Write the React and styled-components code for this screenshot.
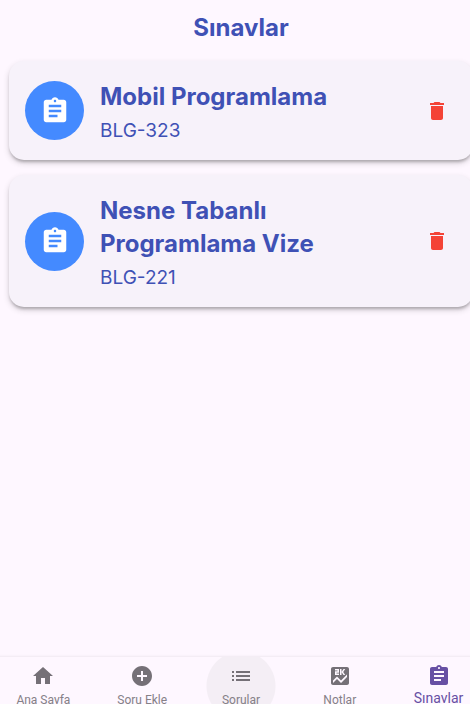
import React from "react";
import styled, { createGlobalStyle } from "styled-components";
import {
  MdAddCircle,
  MdAssignment,
  MdDelete,
  MdHome,
  MdList,
  MdScore,
} from "react-icons/md";

const GlobalStyle = createGlobalStyle`
  * { box-sizing: border-box; }
  body {
    margin: 0;
    background: #fef7ff;
    overflow: hidden;
  }
`;

const Page = styled.div`
  display: flex;
  flex-direction: column;
  width: calc(100% + 12px);
  height: 100vh;
  overflow: hidden;
  color: #3f51b5;
  font-family: Inter, "Noto Sans", sans-serif;
`;

const Header = styled.header`
  padding: 11px 16px 17px;
  text-align: center;
`;

const PageTitle = styled.h1`
  margin: 0;
  font-size: 24px;
  line-height: 33px;
  font-weight: 700;
`;

const ExamList = styled.ul`
  flex: 1;
  display: flex;
  flex-direction: column;
  gap: 15px;
  margin: 0;
  padding: 0 9px;
  list-style: none;
`;

const ExamCard = styled.li`
  display: flex;
  align-items: center;
  gap: 16px;
  padding: 16px;
  border-radius: 15px;
  background: #f7f2fa;
  box-shadow: 0 3px 3px -1px rgba(0, 0, 0, 0.22),
    0 3px 6px rgba(0, 0, 0, 0.16);
`;

const Avatar = styled.span`
  flex: none;
  display: grid;
  place-items: center;
  width: 59px;
  height: 59px;
  border-radius: 50%;
  background: #448aff;
  color: #fff;
  font-size: 30px;
`;

const ExamText = styled.div`
  flex: 1;
  display: flex;
  flex-direction: column;
  gap: 5px;
  padding-top: 3px;
`;

const ExamName = styled.h2`
  margin: 0;
  font-size: 24px;
  line-height: 33px;
  font-weight: 700;
`;

const ExamCode = styled.p`
  margin: 0;
  font-size: 19px;
  line-height: 26px;
`;

const DeleteButton = styled.button`
  flex: none;
  display: grid;
  place-items: center;
  width: 40px;
  height: 40px;
  padding: 0;
  border: 0;
  border-radius: 50%;
  background: none;
  color: #f44336;
  font-size: 24px;
  cursor: pointer;
`;

const NavBar = styled.nav`
  display: flex;
  height: 47px;
  margin: 0 -6px;
  overflow: hidden;
  box-shadow: 0 -1px 2px rgba(0, 0, 0, 0.06);
`;

const NavItem = styled.button`
  flex: 1;
  display: flex;
  flex-direction: column;
  align-items: center;
  gap: 4px;
  padding: 7px 0 0;
  border: 0;
  background: ${(p) =>
    p.$pressed
      ? "radial-gradient(circle at 50% 29px, #f4eef5 34px, transparent 35px)"
      : "none"};
  color: ${(p) => (p.$active ? "#6750a4" : "#757077")};
  font-family: Roboto, sans-serif;
  cursor: pointer;

  svg {
    flex: none;
    font-size: 24px;
  }
`;

const NavLabel = styled.span`
  font-size: ${(p) => (p.$active ? "14px" : "12px")};
  line-height: ${(p) => (p.$active ? "12px" : "16px")};
  color: ${(p) => (p.$active ? "#6750a4" : "#858087")};
  white-space: nowrap;
`;

const exams = [
  { name: "Mobil Programlama", code: "BLG-323" },
  { name: "Nesne Tabanlı Programlama Vize", code: "BLG-221" },
];

const tabs = [
  { label: "Ana Sayfa", Icon: MdHome },
  { label: "Soru Ekle", Icon: MdAddCircle },
  { label: "Sorular", Icon: MdList, pressed: true },
  { label: "Notlar", Icon: MdScore },
  { label: "Sınavlar", Icon: MdAssignment, active: true },
];

export default function App() {
  return (
    <>
      <GlobalStyle />
      <Page lang="tr">
        <Header>
          <PageTitle>Sınavlar</PageTitle>
        </Header>
        <ExamList>
          {exams.map(({ name, code }) => (
            <ExamCard key={code}>
              <Avatar>
                <MdAssignment aria-hidden="true" />
              </Avatar>
              <ExamText>
                <ExamName>{name}</ExamName>
                <ExamCode>{code}</ExamCode>
              </ExamText>
              <DeleteButton type="button" aria-label={`${name} sil`}>
                <MdDelete aria-hidden="true" />
              </DeleteButton>
            </ExamCard>
          ))}
        </ExamList>
        <NavBar>
          {tabs.map(({ label, Icon, active, pressed }) => (
            <NavItem
              key={label}
              type="button"
              $active={active}
              $pressed={pressed}
              aria-current={active ? "page" : undefined}
            >
              <Icon aria-hidden="true" />
              <NavLabel $active={active}>{label}</NavLabel>
            </NavItem>
          ))}
        </NavBar>
      </Page>
    </>
  );
}
